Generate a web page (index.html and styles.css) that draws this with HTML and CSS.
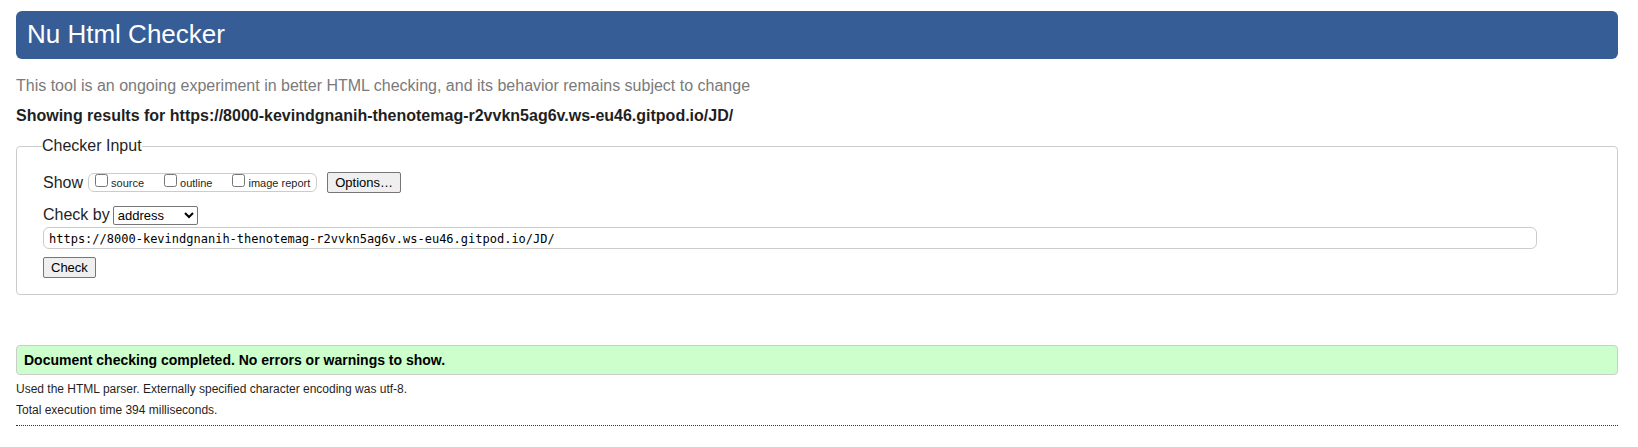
FILE: index.html
```html
<!DOCTYPE html>
<html lang="en">
<head>
<meta charset="utf-8">
<title>Nu Html Checker</title>
<link rel="stylesheet" href="styles.css">
</head>
<body>
<header class="banner"><h1 class="banner-title">Nu Html Checker</h1></header>
<main>
  <p class="tagline">This tool is an ongoing experiment in better HTML checking, and its behavior remains subject to change</p>
  <h2 class="subject">Showing results for https://8000-kevindgnanih-thenotemag-r2vvkn5ag6v.ws-eu46.gitpod.io/JD/</h2>
  <form>
    <fieldset class="panel">
      <legend class="panel-legend">Checker Input</legend>
      <div class="row show-row">
        <span>Show</span>
        <div class="checks">
          <label class="check" for="source"><input class="tick" type="checkbox" id="source"><span>source</span></label>
          <label class="check" for="outline"><input class="tick" type="checkbox" id="outline"><span>outline</span></label>
          <label class="check" for="images"><input class="tick" type="checkbox" id="images"><span>image report</span></label>
        </div>
        <button class="btn options" type="button">Options…</button>
      </div>
      <div class="row by-row">
        <label for="by">Check by</label>
        <select class="by" id="by"><option>address</option><option>file upload</option><option>text input</option></select>
      </div>
      <input class="address" type="text" aria-label="Address" value="https://8000-kevindgnanih-thenotemag-r2vvkn5ag6v.ws-eu46.gitpod.io/JD/">
      <button class="btn" type="button">Check</button>
    </fieldset>
  </form>
  <p class="success">Document checking completed. No errors or warnings to show.</p>
  <p class="detail">Used the HTML parser. Externally specified character encoding was utf-8.</p>
  <p class="detail">Total execution time 394 milliseconds.</p>
  <hr class="rule">
</main>
</body>
</html>
```
FILE: styles.css
```css
* { box-sizing: border-box; }
body {
  margin: 0;
  padding: 11px 20px 20px 16px;
  background: #fff;
  color: #1f1f1f;
  font: 16px/20px "Liberation Sans", Arial, sans-serif;
}
.banner {
  padding: 8px 11px 10px;
  border-radius: 6px;
  background: #365d95;
  color: #fff;
}
.banner-title { margin: 0; font-size: 26px; font-weight: 400; line-height: 30px; }
.tagline { margin: 17px 0 10px; color: #7a7a7a; }
.subject { margin: 0 0 10px; font-size: 16px; line-height: 20px; }
.panel {
  margin: 0;
  padding: 16px 18px 16px 26px;
  border: 1px solid #ccc;
  border-radius: 4px;
}
.panel-legend { margin-left: -1px; padding: 0; line-height: 20px; }
.row { display: flex; align-items: center; }
.show-row { gap: 5px; margin-bottom: 12px; }
.checks {
  display: flex;
  gap: 20px;
  height: 19px;
  padding: 0 6px;
  border: 1px solid #ccc;
  border-radius: 6px;
}
.check { display: flex; gap: 3px; font-size: 11px; line-height: 18px; }
.tick { width: 13px; height: 13px; margin: 0; }
.btn {
  display: block;
  height: 21px;
  padding: 0 7px;
  border: 1px solid #767676;
  border-radius: 2px;
  background: #efefef;
  color: #000;
  font: 13px/19px "Liberation Sans", Arial, sans-serif;
}
.options { margin-left: 5px; }
.by-row { gap: 3px; margin-bottom: 2px; }
.by {
  width: 85px;
  height: 19px;
  padding: 0;
  border: 1px solid #767676;
  border-radius: 2px;
  background: #fff;
  color: #000;
  font: 13px "Liberation Sans", Arial, sans-serif;
}
.address {
  display: block;
  width: 96%;
  height: 22px;
  margin-bottom: 8px;
  padding: 2px 5px 0;
  border: 1px solid #ccc;
  border-radius: 6px;
  color: #000;
  font: 12px "DejaVu Sans Mono", monospace;
}
.success {
  margin: 50px 0 4px;
  padding: 4px 7px;
  border: 1px solid #ccc;
  border-radius: 4px;
  background: #cfc;
  color: #000;
  font-size: 14px;
  font-weight: 700;
}
.detail { margin: 0 0 1px; font-size: 12px; line-height: 20px; }
.rule { margin: 5px 0 0; border: 0; border-top: 1px dotted #333; }
```
